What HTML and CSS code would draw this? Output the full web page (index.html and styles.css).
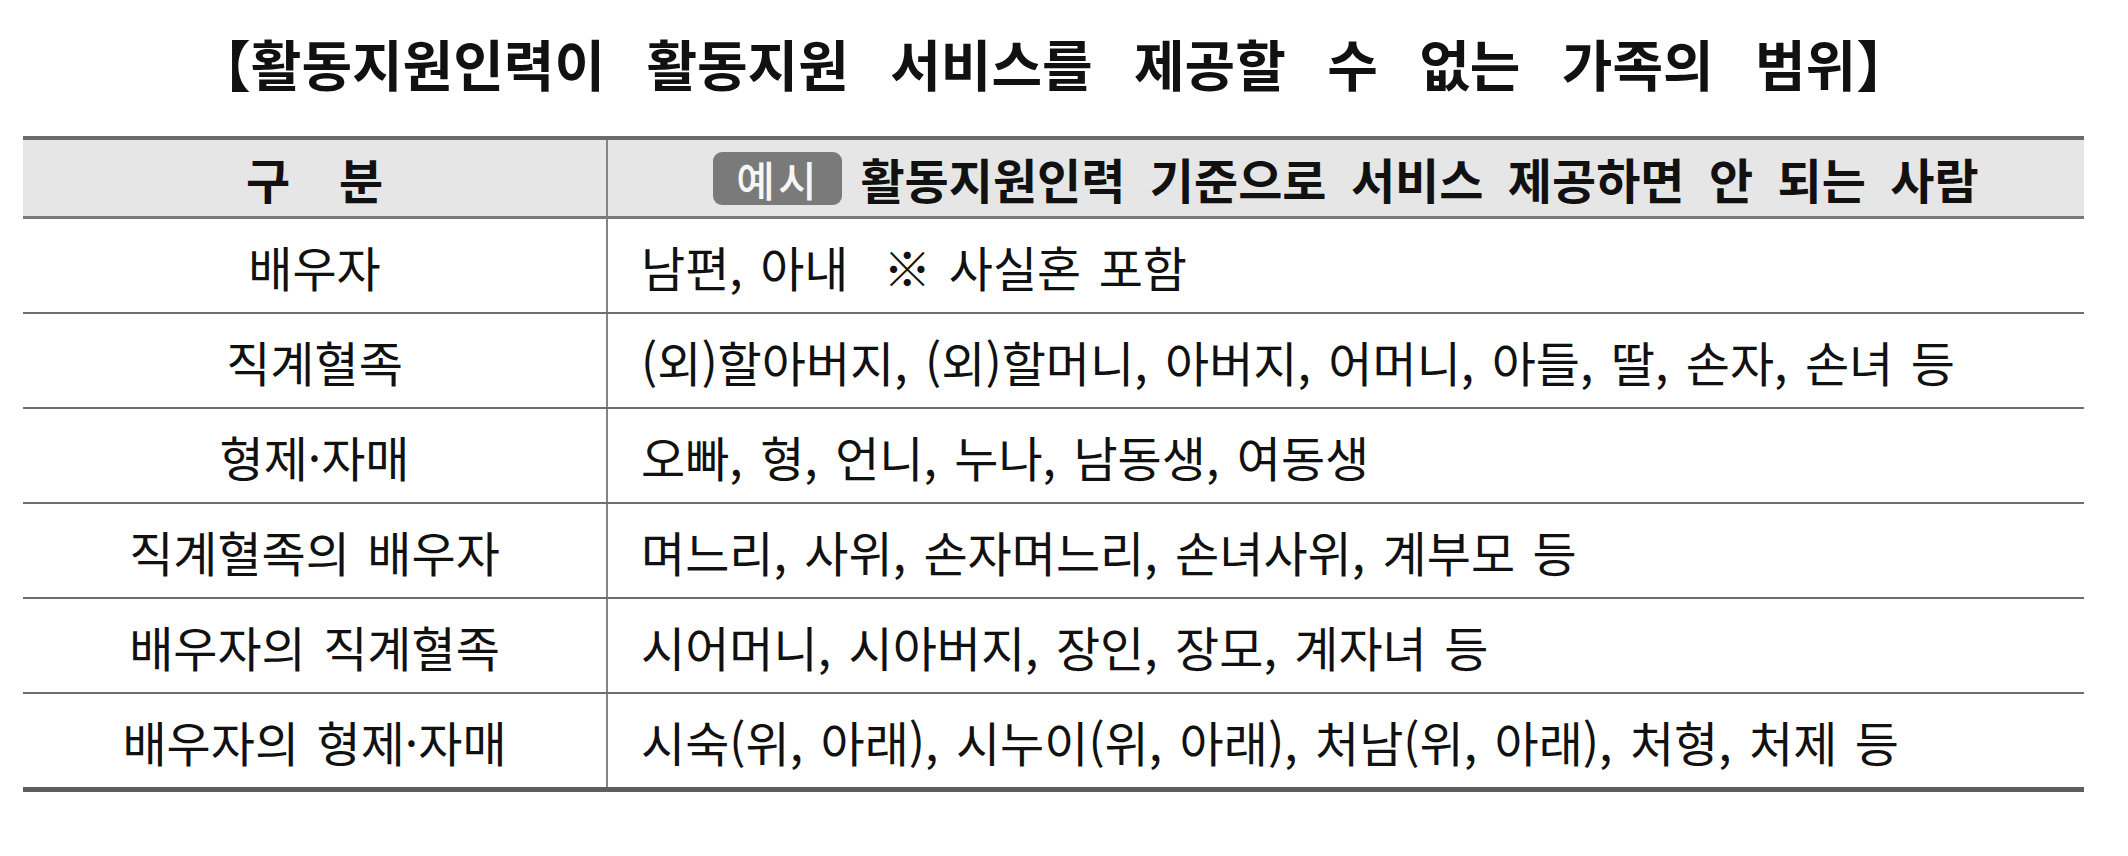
FILE: index.html
```html
<!DOCTYPE html>
<html lang="ko">
<head>
<meta charset="utf-8">
<title>활동지원인력이 활동지원 서비스를 제공할 수 없는 가족의 범위</title>
<link rel="stylesheet" href="styles.css">
</head>
<body>
<div class="page">
  <h1 class="title">【활동지원인력이 활동지원 서비스를 제공할 수 없는 가족의 범위】</h1>
  <div class="table">
    <div class="row head">
      <div class="cell c1">구 &nbsp;분</div>
      <div class="cell c2"><span class="badge">예시</span><span>활동지원인력 기준으로 서비스 제공하면 안 되는 사람</span></div>
    </div>
    <div class="row">
      <div class="cell c1">배우자</div>
      <div class="cell c2">남편, 아내 &nbsp;※ 사실혼 포함</div>
    </div>
    <div class="row">
      <div class="cell c1">직계혈족</div>
      <div class="cell c2">(외)할아버지, (외)할머니, 아버지, 어머니, 아들, 딸, 손자, 손녀 등</div>
    </div>
    <div class="row">
      <div class="cell c1">형제·자매</div>
      <div class="cell c2">오빠, 형, 언니, 누나, 남동생, 여동생</div>
    </div>
    <div class="row">
      <div class="cell c1">직계혈족의 배우자</div>
      <div class="cell c2">며느리, 사위, 손자며느리, 손녀사위, 계부모 등</div>
    </div>
    <div class="row">
      <div class="cell c1">배우자의 직계혈족</div>
      <div class="cell c2">시어머니, 시아버지, 장인, 장모, 계자녀 등</div>
    </div>
    <div class="row last">
      <div class="cell c1">배우자의 형제·자매</div>
      <div class="cell c2">시숙(위, 아래), 시누이(위, 아래), 처남(위, 아래), 처형, 처제 등</div>
    </div>
  </div>
</div>
</body>
</html>
```
FILE: styles.css
```css
html, body {
  margin: 0;
  padding: 0;
  background: #ffffff;
}
body {
  font-family: "Noto Sans CJK KR", "Noto Sans", sans-serif;
  color: #111111;
}
.page {
  width: 2061px;
  padding-left: 23px;
}
.title {
  margin: 35px 0 46px 0;
  height: 55px;
  line-height: 55px;
  font-size: 55px;
  font-weight: 700;
  text-align: center;
  word-spacing: 26px;
  letter-spacing: 0;
}
.table {
  display: flex;
  flex-direction: column;
}
.row {
  display: grid;
  grid-template-columns: 585px 1fr;
  height: 93px;
  border-bottom: 2px solid #6e6e6e;
  font-size: 48px;
  word-spacing: 4px;
}
.row.head {
  height: 76px;
  background: #e6e6e6;
  border-top: 4px solid #6a6a6a;
  border-bottom: 3px solid #7a7a7a;
  font-weight: 700;
  word-spacing: 11px;
}
.row.last {
  border-bottom: 5px solid #5e5e5e;
}
.cell {
  display: flex;
  align-items: center;
  white-space: nowrap;
}
.c1 {
  justify-content: center;
  border-right: 2px solid #858585;
}
.c2 {
  padding-left: 33px;
}
.head .c2 {
  justify-content: center;
  padding-left: 0;
  gap: 18px;
}
.badge {
  display: inline-flex;
  align-items: center;
  justify-content: center;
  width: 129px;
  height: 53px;
  border-radius: 9px;
  background: #7a7a7a;
  color: #f6f6f6;
  font-weight: 500;
  font-size: 42px;
  word-spacing: 0;
  letter-spacing: 3px;
}
```
